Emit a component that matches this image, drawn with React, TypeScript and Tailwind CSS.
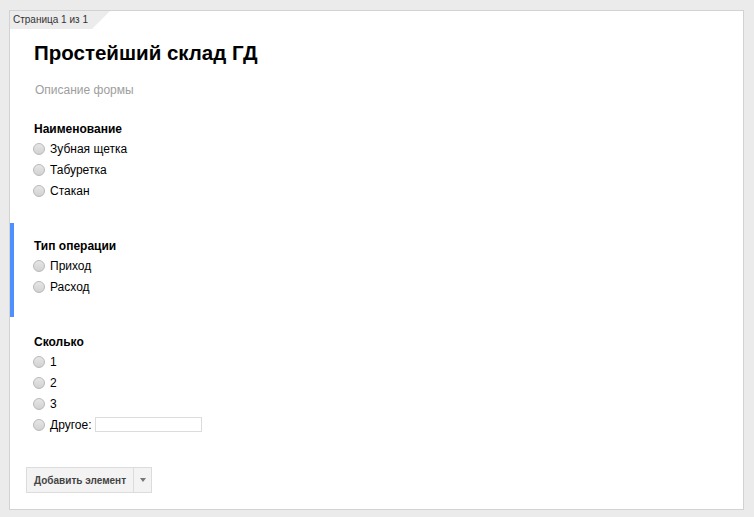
import React from "react";

const font = { fontFamily: '"Liberation Sans", Arial, sans-serif' };

type Question = { title: string; options: string[]; active?: boolean; other?: boolean };

const questions: Question[] = [
  { title: "Наименование", options: ["Зубная щетка", "Табуретка", "Стакан"] },
  { title: "Тип операции", options: ["Приход", "Расход"], active: true },
  { title: "Сколько", options: ["1", "2", "3"], other: true },
];

function Radio() {
  return (
    <span className="inline-block h-[12px] w-[12px] shrink-0 rounded-full border border-[#b9b9b9] bg-gradient-to-b from-[#e6e6e6] to-[#d2d2d2]" />
  );
}

function Option({ label, children }: { label: string; children?: React.ReactNode }) {
  return (
    <div className="flex h-[21px] items-center text-[12px] text-black">
      <Radio />
      <span className="ml-[5px]">{label}</span>
      {children}
    </div>
  );
}

function QuestionItem({ q }: { q: Question }) {
  return (
    <div
      className={`mt-[2px] border-l-4 pb-[20px] pl-[20px] pt-[15px] ${
        q.active ? "border-[#4d90fe]" : "border-transparent"
      }`}
    >
      <div className="mb-[1px] text-[12px] font-bold leading-[16px] text-black">{q.title}</div>
      <div className="-ml-[1px]">
        {q.options.map((o) => (
          <Option key={o} label={o} />
        ))}
        {q.other && (
          <Option label="Другое:">
            <span className="ml-[4px] h-[15px] w-[107px] border border-[#dcdcdc] bg-white" />
          </Option>
        )}
      </div>
    </div>
  );
}

export default function App() {
  return (
    <div className="min-h-[517px] bg-[#ebebeb] pt-[10px]" style={font}>
      <div className="ml-[9px] flex h-[500px] w-[735px] flex-col border border-[#d2d2d2] bg-white">
        <div
          className="h-[18px] w-[100px] bg-[#ececec] pl-[3px] text-[10px] leading-[18px] text-[#333]"
          style={{ clipPath: "polygon(0 0, 100% 0, 82% 100%, 0 100%)" }}
        >
          Страница 1 из 1
        </div>
        <h1 className="ml-[24px] mt-[12px] text-[20.5px] font-bold leading-[24px] text-black">
          Простейший склад ГД
        </h1>
        <p className="ml-[25px] mt-[17px] text-[12px] leading-[16px] text-[#9e9e9e]">Описание формы</p>
        <div className="mt-[6px]">
          {questions.map((q) => (
            <QuestionItem key={q.title} q={q} />
          ))}
        </div>
        <div className="ml-[16px] mt-[12px] flex h-[26px] w-fit border border-[#dcdcdc] bg-[#f3f3f3] text-[10px] font-bold text-[#444]">
          <span className="flex items-center px-[7px]">Добавить элемент</span>
          <span className="flex w-[18px] items-center justify-center border-l border-[#dcdcdc]">
            <span className="h-0 w-0 border-x-[3px] border-t-[4px] border-x-transparent border-t-[#777]" />
          </span>
        </div>
      </div>
    </div>
  );
}
